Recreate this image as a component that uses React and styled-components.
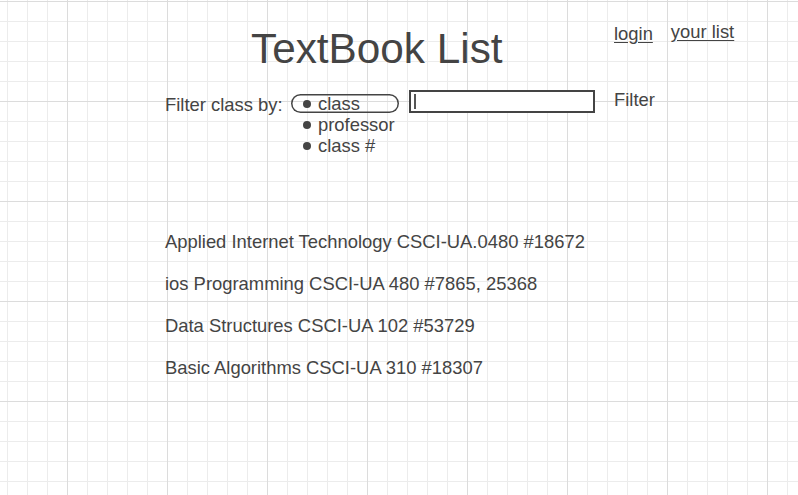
import React from 'react';
import styled, { createGlobalStyle } from 'styled-components';

const GlobalStyle = createGlobalStyle`
  html, body {
    margin: 0;
    padding: 0;
    height: 100%;
  }
  body {
    font-family: "Liberation Sans", Arial, sans-serif;
    color: #444;
    background-color: #fff;
    background-image:
      linear-gradient(to right, #dcdcdc 1px, transparent 1px),
      linear-gradient(to bottom, #dcdcdc 1px, transparent 1px),
      linear-gradient(to right, #ececec 1px, transparent 1px),
      linear-gradient(to bottom, #ececec 1px, transparent 1px);
    background-size: 100px 100px, 100px 100px, 20px 20px, 20px 20px;
    background-position: 67px 0, 0 1px, 7px 0, 0 1px;
  }
`;

const Page = styled.div`
  padding: 24px 0 0 165px;
  min-height: 495px;
  box-sizing: border-box;
  font-size: 18.4px;
`;

const Header = styled.header`
  display: flex;
  align-items: flex-start;
  margin-left: 86px;
`;

const Title = styled.h1`
  flex: 0 0 363px;
  margin: 1px 0 0;
  font-size: 42.3px;
  font-weight: normal;
  line-height: normal;
`;

const Nav = styled.nav`
  display: flex;
  gap: 18px;
`;

const NavLink = styled.a`
  color: #444;
  text-decoration: underline;
  text-underline-offset: 2px;
  margin-top: ${p => (p.$lift ? '-3px' : '-1px')};
  cursor: pointer;
`;

const FilterRow = styled.div`
  display: flex;
  align-items: flex-start;
  margin-top: 17px;
`;

const Label = styled.span`
  margin-top: 4px;
  width: 126px;
`;

const RadioList = styled.ul`
  list-style: none;
  margin: 4px 0 0;
  padding: 0;
  width: 108px;
`;

const Option = styled.li`
  display: flex;
  align-items: center;
  padding-left: 12px;
  height: ${p => (p.$boxed ? '19px' : '21px')};
  line-height: ${p => (p.$boxed ? '19px' : '21px')};
  margin-bottom: ${p => (p.$boxed ? '1px' : '0')};
  border-radius: 10px;
  box-shadow: ${p => (p.$boxed ? 'inset 0 0 0 1.5px #444' : 'none')};
`;

const Bullet = styled.span`
  width: 8px;
  height: 8px;
  border-radius: 50%;
  background: #444;
  margin-right: 7px;
  flex: none;
`;

const TextBox = styled.div`
  box-sizing: border-box;
  width: 186px;
  height: 23px;
  margin-left: 10px;
  border: 2px solid #444;
  background: #fff;
  padding: 2px 0 0 3px;
`;

const Caret = styled.span`
  display: block;
  width: 2px;
  height: 15px;
  background: #555;
`;

const FilterButton = styled.button`
  margin: -1px 0 0 19px;
  padding: 0;
  border: none;
  background: none;
  font: inherit;
  color: #444;
  line-height: normal;
`;

const ClassList = styled.ul`
  list-style: none;
  margin: 75px 0 0;
  padding: 0;
`;

const ClassItem = styled.li`
  line-height: 21px;
  margin-bottom: 21px;
`;

const options = ['class', 'professor', 'class #'];

const classes = [
  'Applied Internet Technology CSCI-UA.0480 #18672',
  'ios Programming CSCI-UA 480 #7865, 25368',
  'Data Structures CSCI-UA 102 #53729',
  'Basic Algorithms CSCI-UA 310 #18307',
];

const App = () => {
  return (
    <>
      <GlobalStyle />
      <Page>
        <Header>
          <Title>TextBook List</Title>
          <Nav>
            <NavLink>login</NavLink>
            <NavLink $lift>your list</NavLink>
          </Nav>
        </Header>
        <FilterRow>
          <Label>Filter class by:</Label>
          <RadioList>
            {options.map((o, i) => (
              <Option key={o} $boxed={i === 0}>
                <Bullet />
                {o}
              </Option>
            ))}
          </RadioList>
          <TextBox>
            <Caret />
          </TextBox>
          <FilterButton>Filter</FilterButton>
        </FilterRow>
        <ClassList>
          {classes.map(c => (
            <ClassItem key={c}>{c}</ClassItem>
          ))}
        </ClassList>
      </Page>
    </>
  );
};

export default App;
